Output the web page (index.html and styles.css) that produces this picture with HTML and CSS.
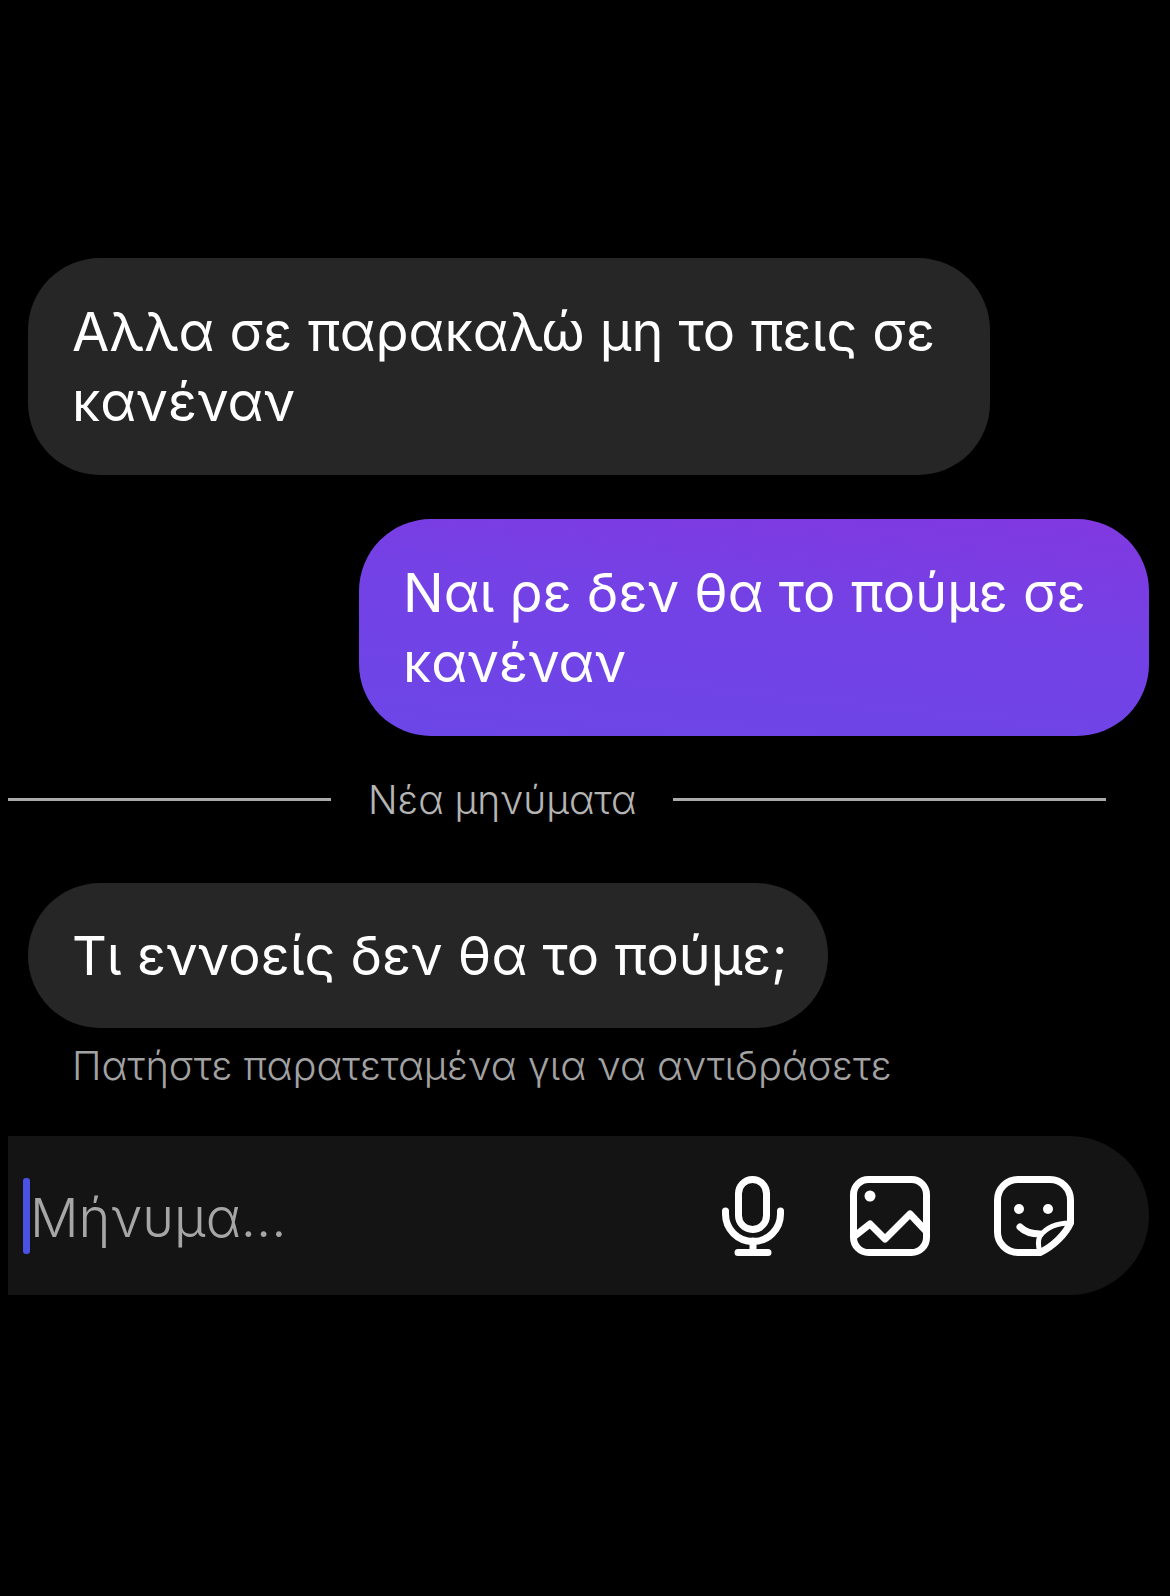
FILE: index.html
```html
<!DOCTYPE html>
<html lang="el">
<head>
    <meta charset="UTF-8">
    <title>Μηνύματα</title>
    <link rel="stylesheet" href="styles.css">
</head>
<body>
<div class="chat">
    <div class="bubble theirs first">Αλλα σε παρακαλώ μη το πεις σε κανέναν</div>
    <div class="bubble mine">Ναι ρε δεν θα το πούμε σε κανέναν</div>
    <div class="divider">
        <span class="line line-left"></span>
        <span class="divider-text">Νέα μηνύματα</span>
        <span class="line line-right"></span>
    </div>
    <div class="bubble theirs last">Τι εννοείς δεν θα το πούμε;</div>
    <div class="hint">Πατήστε παρατεταμένα για να αντιδράσετε</div>
    <div class="composer">
        <span class="caret"></span>
        <span class="placeholder">Μήνυμα...</span>
        <svg class="icon mic" width="62" height="80" viewBox="0 0 62 80" fill="none" stroke="#fff" stroke-width="7" stroke-linecap="round">
            <rect x="16.500" y="3.500" width="28" height="50" rx="14"/>
            <path d="M3.500 35v3a27.500 27.500 0 0 0 55 0v-3"/>
            <path d="M31 65v11M16 76.500h30"/>
        </svg>
        <svg class="icon pic" width="80" height="80" viewBox="0 0 80 80" fill="none" stroke="#fff" stroke-width="7" stroke-linecap="round" stroke-linejoin="round">
            <rect x="3.500" y="3.500" width="73" height="73" rx="15"/>
            <circle cx="20" cy="20" r="5.500" fill="#fff" stroke="none"/>
            <path d="M6 59l14-11 15 15 25-25 16 17"/>
        </svg>
        <svg class="icon sticker" width="80" height="80" viewBox="0 0 80 80" fill="none" stroke="#fff" stroke-width="7" stroke-linecap="round" stroke-linejoin="round">
            <path d="M46 76.500H24A20.500 20.500 0 0 1 3.500 56V24A20.500 20.500 0 0 1 24 3.500h32A20.500 20.500 0 0 1 76.500 24v23c-5 11-17 23-30.500 29.500z"/>
            <path d="M26 51c5 5 12 7 20 7"/>
            <path d="M46 76c-2-6-2-12 0-16 6-8 16-13 30-13" stroke-width="5"/>
            <circle cx="25" cy="33" r="5" fill="#fff" stroke="none"/>
            <circle cx="54" cy="33" r="5" fill="#fff" stroke="none"/>
        </svg>
    </div>
</div>
</body>
</html>
```

FILE: styles.css
```css
*{margin: 0;padding: 0;box-sizing: border-box;}
html,body{height: 100%;background: #000;}
body{font-family: Inter, "Liberation Sans", sans-serif;color: #fff;font-weight: 300;}
.chat{display: flex;flex-direction: column;padding-top: 258px;}
.bubble{font-size: 54px;line-height: 70px;padding: 38.5px 30px 38.5px 44px;border-radius: 72px;font-weight: 400;}
.theirs{background: #262626;margin-left: 28px;}
.first{width: 962px;}
.last{width: 800px;margin-top: 66px;padding-top: 37.500px;padding-bottom: 37.500px;}
.mine{background: linear-gradient(186deg, #8238e0 0%, #7441e5 40%, #6c46e8 100%);width: 790px;margin: 44px 0 0 359px;}
.divider{display: flex;align-items: center;gap: 37px;margin: 45px 64px 0 8px;height: 36px;}
.line{height: 3px;background: #aaa;flex: 1;}
.line-left{flex: 0 0 323px;}
.divider-text{font-size: 39px;color: #b4b4b4;white-space: nowrap;}
.hint{font-size: 39.800px;line-height: 44px;color: #a2a2a2;margin: 16px 0 0 72px;}
.composer{display: flex;align-items: center;height: 159px;margin: 48px 21px 0 8px;padding: 0 75px 0 15px;background: #141414;border-radius: 0 80px 80px 0;}
.caret{width: 7px;height: 76px;background: #4a52e4;border-radius: 3px;flex: none;}
.placeholder{font-size: 54px;color: #a6a6a6;flex: 1;margin-top: 4px;}
.icon{flex: none;display: block;}
.pic{margin-left: 66px;}
.sticker{margin-left: 64px;}
```
